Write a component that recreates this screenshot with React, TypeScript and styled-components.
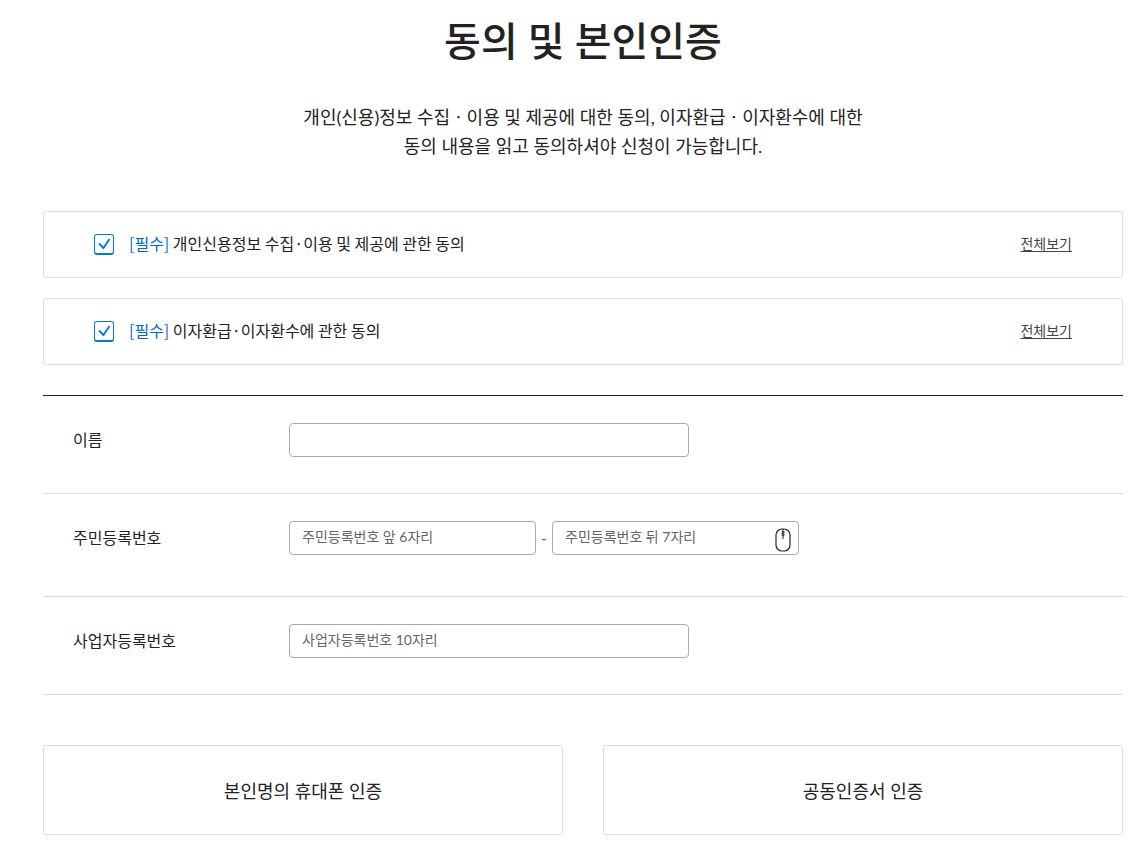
import React from "react";
import styled, { createGlobalStyle } from "styled-components";

const Global = createGlobalStyle`
  *, *::before, *::after { box-sizing: border-box; }
  body { margin: 0; background: #fff; color: #222; font-family: Lato, "Noto Sans CJK KR", sans-serif; font-size: 16px; font-weight: 400; }
  button, input { font: inherit; color: inherit; }
`;
const Page = styled.main`padding: 11px 12px 9px 43px;`;
const Title = styled.h1`margin: 0; text-align: center; font-size: 40px; line-height: 60px; font-weight: 500;`;
const Lead = styled.p`margin: 32px 0 50px; text-align: center; font-size: 18px; line-height: 29px;`;
const Consent = styled.div`
  display: flex; align-items: center; justify-content: space-between;
  height: 67px; padding: 0 50px; margin-bottom: 20px; border: 1px solid #ddd; border-radius: 3px;
`;
const ConsentLabel = styled.label`display: flex; align-items: center; gap: 15px; line-height: 24px;`;
const ConsentText = styled.span`padding-bottom: 4px; font-family: "Noto Sans CJK KR", sans-serif;`;
const Required = styled.span`color: #0068d0;`;
const CheckWrap = styled.span`display: grid; width: 20px; height: 21px; > * { grid-area: 1 / 1; }`;
const Check = styled.input`
  appearance: none; margin: 0; width: 20px; height: 21px; border: 1px solid #0078dd; border-bottom-width: 2px;
  border-radius: 3px; background: #fff;
`;
const ViewAll = styled.a`font-size: 14px; line-height: 20px; color: #444; text-decoration: underline; text-underline-offset: 2px; padding-bottom: 1px;`;
const Form = styled.form`margin: 30px 0 0;`;
const Fields = styled.div`border-top: 1px solid #222;`;
const Row = styled.div<{ $tall?: boolean }>`
  display: flex; align-items: flex-start; height: ${p => (p.$tall ? 103 : 98)}px; padding: 27px 30px 0; border-bottom: 1px solid #ddd;
`;
const FieldLabel = styled.label`width: 216px; line-height: 34px;`;
const Field = styled.div<{ $w: number }>`
  display: flex; width: ${p => p.$w}px; height: 34px; padding: 0 7px 0 12px; border: 1px solid #aaa; border-radius: 4px;
`;
const Input = styled.input`
  flex: 1; min-width: 0; height: 28px; padding: 0; border: 0; outline: 0; background: none; font-size: 14px;
  &::placeholder { color: #666; opacity: 1; }
`;
const Dash = styled.span`width: 16px; text-align: center; line-height: 34px; color: #666;`;
const Actions = styled.div`display: grid; grid-template-columns: 1fr 1fr; gap: 40px; margin-top: 50px;`;
const Action = styled.button`height: 90px; border: 1px solid #ddd; border-radius: 3px; background: #fff; font-size: 18px;`;
const MouseIcon = styled.svg`align-self: flex-end; margin-bottom: 2px;`;

const Tick = () => (
  <svg width="20" height="21" viewBox="0 0 20 21" fill="none" stroke="#0078dd" strokeWidth="1.8" aria-hidden="true">
    <path d="M5 9.500l4.500 4.500L15.500 5" />
  </svg>
);
const Mouse = () => (
  <MouseIcon width="16" height="24" viewBox="0 0 16 24" fill="none" stroke="#222" aria-hidden="true">
    <rect x="1" y="1" width="14" height="22" rx="6" strokeWidth="1.2" />
    <path d="M8 1v10" />
    <path d="M8 3v5" strokeWidth="3" strokeOpacity="0.6" />
  </MouseIcon>
);
const ConsentItem = ({ text }: { text: string }) => (
  <Consent>
    <ConsentLabel>
      <CheckWrap><Check type="checkbox" defaultChecked /><Tick /></CheckWrap>
      <ConsentText><Required>[필수]</Required> {text}</ConsentText>
    </ConsentLabel>
    <ViewAll href="#terms">전체보기</ViewAll>
  </Consent>
);

export default function App() {
  return (
    <>
      <Global />
      <Page>
        <Title>동의 및 본인인증</Title>
        <Lead>개인(신용)정보 수집ㆍ이용 및 제공에 대한 동의, 이자환급ㆍ이자환수에 대한<br />동의 내용을 읽고 동의하셔야 신청이 가능합니다.</Lead>
        <ConsentItem text="개인신용정보 수집·이용 및 제공에 관한 동의" />
        <ConsentItem text="이자환급·이자환수에 관한 동의" />
        <Form>
          <Fields>
            <Row><FieldLabel htmlFor="name">이름</FieldLabel><Field $w={400}><Input id="name" /></Field></Row>
            <Row $tall>
              <FieldLabel htmlFor="rrn">주민등록번호</FieldLabel>
              <Field $w={247}><Input id="rrn" placeholder="주민등록번호 앞 6자리" /></Field>
              <Dash>-</Dash>
              <Field $w={247}><Input type="password" aria-label="주민등록번호 뒤 7자리" placeholder="주민등록번호 뒤 7자리" /><Mouse /></Field>
            </Row>
            <Row><FieldLabel htmlFor="biz">사업자등록번호</FieldLabel><Field $w={400}><Input id="biz" placeholder="사업자등록번호 10자리" /></Field></Row>
          </Fields>
          <Actions>
            <Action type="button">본인명의 휴대폰 인증</Action>
            <Action type="button">공동인증서 인증</Action>
          </Actions>
        </Form>
      </Page>
    </>
  );
}
